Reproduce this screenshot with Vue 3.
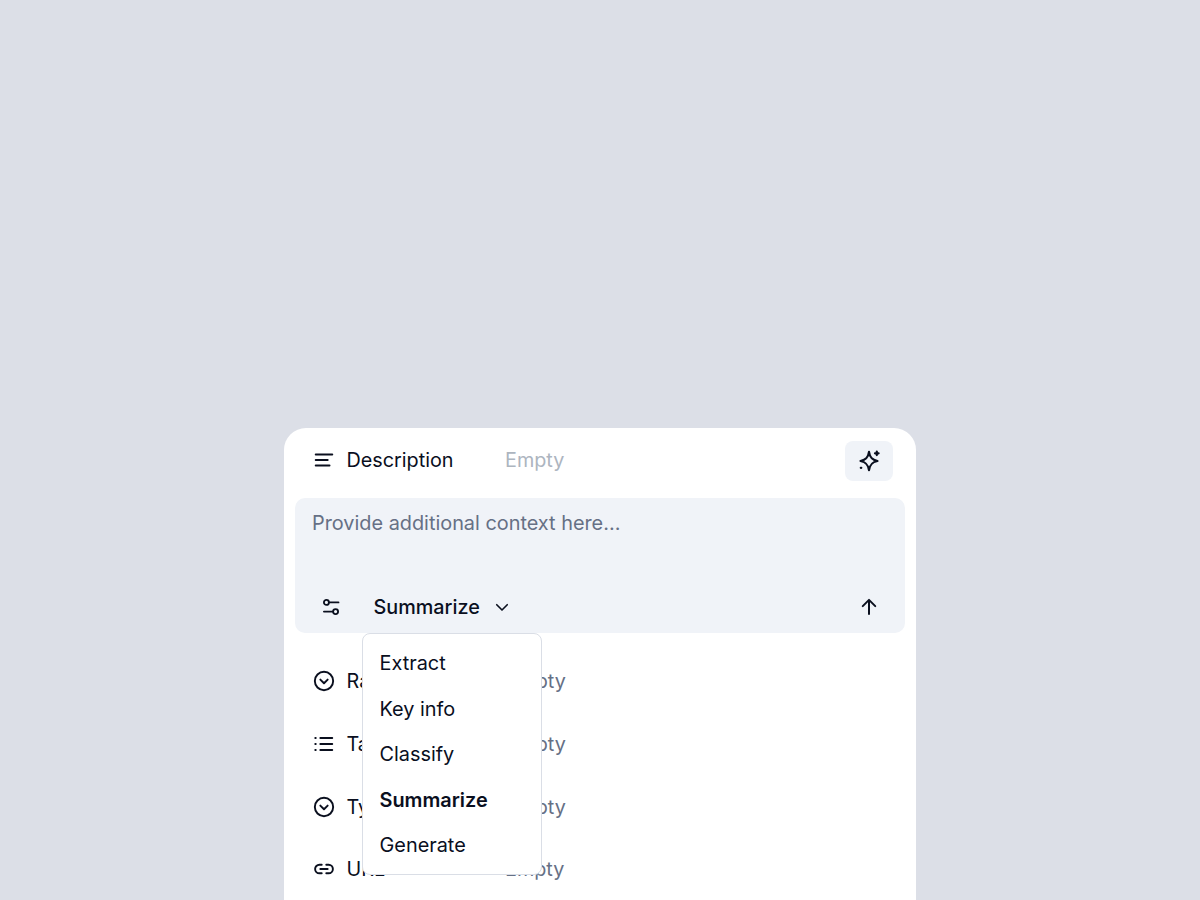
<script setup>
const rows = [
  { icon: 'circle', label: 'Rating', wide: true },
  { icon: 'list', label: 'Tags', wide: true },
  { icon: 'circle', label: 'Type', wide: true },
  { icon: 'link', label: 'URL', wide: false }
]
const options = ['Extract', 'Key info', 'Classify', 'Summarize', 'Generate']
</script>

<template>
  <div class="page">
    <div class="card">
      <div class="row head">
        <svg class="icon" viewBox="0 0 24 24" fill="none" stroke="#0a0f1e" stroke-width="2.200" stroke-linecap="round">
          <path d="M3 6h18M3 12h13M3 18h15" />
        </svg>
        <span class="label">Description</span>
        <span class="empty light">Empty</span>
        <button class="ai">
          <svg width="24" height="24" viewBox="0 0 24 24" fill="none" stroke="#0a0f1e" stroke-width="2.200" stroke-linejoin="round" stroke-linecap="round">
            <path d="M12 2.800c.8 5.400 2.700 8 8.500 9.200-5.800 1.200-7.700 3.800-8.500 9.200-.8-5.400-2.700-8-8.500-9.200 5.800-1.200 7.700-3.800 8.500-9.200Z" />
            <path d="M19.800 2.500v3.600M18 4.300h3.600M3.800 18.800h.5" />
          </svg>
        </button>
      </div>

      <div class="box">
        <div class="placeholder">Provide additional context here...</div>
        <div class="tools">
          <svg class="tune" viewBox="0 0 24 24" fill="none" stroke="#0a0f1e" stroke-width="2.200" stroke-linecap="round">
            <circle cx="6.500" cy="6.500" r="3" />
            <circle cx="17.500" cy="17.500" r="3" />
            <path d="M9.500 6.500H21M3.500 17.500h11" />
          </svg>
          <span class="mode">Summarize</span>
          <svg class="chev" viewBox="0 0 24 24" fill="none" stroke="#0a0f1e" stroke-width="2.200" stroke-linecap="round" stroke-linejoin="round">
            <path d="m5 9 7 7 7-7" />
          </svg>
          <svg class="send" viewBox="0 0 24 24" fill="none" stroke="#0a0f1e" stroke-width="2.400" stroke-linecap="round" stroke-linejoin="round">
            <path d="M12 20.500V3.500M4.500 11 12 3.500l7.500 7.500" />
          </svg>
        </div>
        <ul class="menu">
          <li v-for="o in options" :key="o" :class="{ active: o === 'Summarize' }">{{ o }}</li>
        </ul>
      </div>

      <div class="rows">
        <div v-for="r in rows" :key="r.label" class="row" :class="{ wide: r.wide }">
          <svg class="icon" viewBox="0 0 24 24" fill="none" stroke="#0a0f1e" stroke-width="2.100" stroke-linecap="round" stroke-linejoin="round">
            <template v-if="r.icon === 'circle'">
              <circle cx="12" cy="12" r="10" />
              <path d="m8 10.500 4 4 4-4" />
            </template>
            <path v-else-if="r.icon === 'list'" d="M8 5.500h13M8 12h13M8 18.500h13M2.500 5.500h.5M2.500 12h.5M2.500 18.500h.5" />
            <path v-else d="M9.500 7.300H7a4.700 4.700 0 0 0 0 9.400h2.500M14.500 7.300H17a4.700 4.700 0 0 1 0 9.400h-2.500M8 12h8" />
          </svg>
          <span class="label">{{ r.label }}</span>
          <span class="empty">Empty</span>
        </div>
      </div>
    </div>
  </div>
</template>

<style scoped>
.page {
  height: 900px;
  overflow: hidden;
  padding-top: 428px;
  box-sizing: border-box;
  background: #dcdfe7;
  font-family: Inter, "Liberation Sans", sans-serif;
}

.card {
  width: 632px;
  height: 520px;
  margin: 0 auto;
  padding: 0 11px;
  box-sizing: border-box;
  background: #fff;
  border-radius: 22px;
}

.row {
  display: flex;
  align-items: center;
  height: 62.700px;
  padding: 0 18px;
  font-size: 19.800px;
  color: #0a0f1e;
}

.head {
  height: 66px;
  padding-right: 12px;
  margin-bottom: 4px;
}

.head .icon,
.head .label,
.head .empty {
  margin-bottom: 2px;
}

.icon {
  width: 22px;
  height: 22px;
  flex: none;
  margin-right: 11.500px;
}

.label {
  width: 158.500px;
  flex: none;
}

.wide .label {
  width: 160px;
}

.empty {
  color: #667085;
}

.empty.light {
  color: #adb5bf;
}

.ai {
  display: flex;
  align-items: center;
  justify-content: center;
  width: 48px;
  height: 40px;
  margin-left: auto;
  padding: 0;
  border: 0;
  border-radius: 8px;
  background: #f0f3f8;
}

.box {
  position: relative;
  height: 135px;
  padding: 13px 17px 0;
  box-sizing: border-box;
  background: #f0f3f8;
  border-radius: 10px;
}

.placeholder {
  font-size: 19.870px;
  line-height: 25px;
  color: #667085;
}

.tools {
  display: flex;
  align-items: center;
  margin-top: 59px;
  font-size: 19.800px;
  font-weight: 500;
  color: #0a0f1e;
}

.tune {
  width: 20px;
  height: 20px;
  margin: 0 32.500px 0 9px;
}

.chev {
  width: 18px;
  height: 18px;
  margin-left: 13.500px;
}

.send {
  width: 20px;
  height: 20px;
  margin-left: auto;
  margin-right: 9px;
}

.menu {
  position: absolute;
  z-index: 2;
  top: 135px;
  left: 67px;
  width: 180px;
  height: 242px;
  margin: 0;
  padding: 7px 0 0 16.500px;
  box-sizing: border-box;
  list-style: none;
  background: #fff;
  border: 1px solid #dadee6;
  border-radius: 8px;
  font-size: 19.870px;
  color: #0a0f1e;
}

.menu li {
  height: 45.500px;
  line-height: 45.500px;
}

.menu li.active {
  font-weight: 600;
}

.rows {
  padding-top: 17px;
}
</style>
